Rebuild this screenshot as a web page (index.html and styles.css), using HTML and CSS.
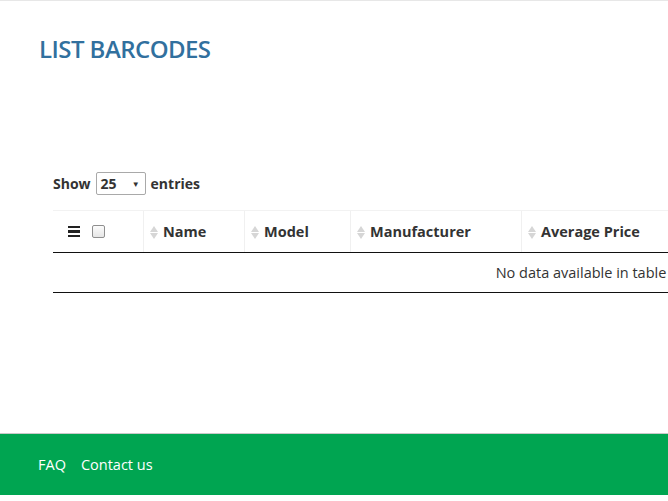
FILE: index.html
```html
<!DOCTYPE html>
<html>
<head>
<meta charset="utf-8">
<link rel="stylesheet" href="styles.css">
</head>
<body>
<div class="topbar"></div>
<main class="content">
  <h1 class="title">LIST BARCODES</h1>
  <div class="table-area">
    <div class="length">
      <span>Show</span>
      <span class="select">25<span class="caret">▼</span></span>
      <span>entries</span>
    </div>
    <table class="grid">
      <thead>
        <tr>
          <th class="col-sel">
            <span class="tools">
              <span class="burger"><i></i><i></i><i></i></span>
              <span class="check"></span>
            </span>
          </th>
          <th class="col-name"><span class="sort"><b class="up"></b><b class="down"></b></span>Name</th>
          <th class="col-model"><span class="sort"><b class="up"></b><b class="down"></b></span>Model</th>
          <th class="col-man"><span class="sort"><b class="up"></b><b class="down"></b></span>Manufacturer</th>
          <th class="col-price"><span class="sort"><b class="up"></b><b class="down"></b></span>Average Price</th>
        </tr>
      </thead>
      <tbody>
        <tr><td colspan="5" class="empty">No data available in table</td></tr>
      </tbody>
    </table>
  </div>
</main>
<footer class="footer">
  <a class="flink">FAQ</a>
  <a class="flink">Contact us</a>
</footer>
</body>
</html>
```
FILE: styles.css
```css
html, body {
  margin: 0;
  padding: 0;
  overflow: hidden;
  background: #fff;
  font-family: "Open Sans", "Noto Sans", sans-serif;
  color: #333;
}
.topbar {
  height: 1px;
  background: #e7e7e7;
}
.content {
  padding: 33px 0 0 39px;
  height: 432px;
  box-sizing: border-box;
}
.title {
  margin: 0;
  font-size: 24px;
  font-weight: 600;
  color: #31709e;
  line-height: 30px;
  letter-spacing: -0.55px;
}
.table-area {
  padding-left: 14px;
  margin-top: 107px;
}
.length {
  display: flex;
  align-items: center;
  gap: 5px;
  font-size: 14px;
  font-weight: 700;
  height: 24px;
}
.select {
  display: inline-flex;
  align-items: center;
  justify-content: space-between;
  width: 50px;
  height: 23px;
  box-sizing: border-box;
  border: 1px solid #a9a9a9;
  border-radius: 2px;
  padding: 0 5px 0 4px;
  font-weight: 700;
  font-size: 14px;
}
.caret {
  font-size: 8px;
  color: #333;
}
.grid {
  margin-top: 15px;
  width: 1056px;
  border-collapse: collapse;
  font-size: 14.5px;
}
.grid th {
  text-align: left;
  font-weight: 700;
  height: 41px;
  padding: 0 0 0 6px;
  border-top: 1px solid #f2f2f2;
  border-left: 1px solid #f0f0f0;
  border-bottom: 1px solid #111;
  color: #333;
  white-space: nowrap;
}
.grid th:first-child {
  border-left: none;
}
.col-sel { width: 75px; padding-left: 15px !important; }
.col-name { width: 94px; }
.col-model { width: 99px; }
.col-man { width: 164px; }
.tools {
  display: flex;
  align-items: center;
  gap: 12px;
}
.burger {
  display: flex;
  flex-direction: column;
  gap: 2px;
  width: 12px;
}
.burger i {
  display: block;
  height: 2.5px;
  background: #222;
}
.check {
  width: 11px;
  height: 11px;
  border: 1px solid #8f8f8f;
  border-radius: 2px;
  background: linear-gradient(#fcfcfc, #e6e6e6);
}
.sort {
  display: inline-flex;
  flex-direction: column;
  gap: 1px;
  vertical-align: middle;
  margin-right: 5px;
  position: relative;
  top: -1px;
}
.sort b {
  display: block;
  width: 0;
  height: 0;
  border-left: 4px solid transparent;
  border-right: 4px solid transparent;
}
.sort .up { border-bottom: 6px solid #d6d6d6; }
.sort .down { border-top: 6px solid #d6d6d6; }
.empty {
  text-align: center;
  height: 39px;
  padding: 0;
  border-bottom: 1px solid #111;
  font-size: 14.5px;
  color: #333;
}
.footer {
  border-top: 1px solid #c9c9c9;
  background: #00a551;
  height: 61px;
  display: flex;
  align-items: center;
  gap: 15px;
  padding-left: 38px;
  margin-bottom: 6px;
}
.flink {
  color: #fff;
  font-size: 14.5px;
  text-decoration: none;
}
```
